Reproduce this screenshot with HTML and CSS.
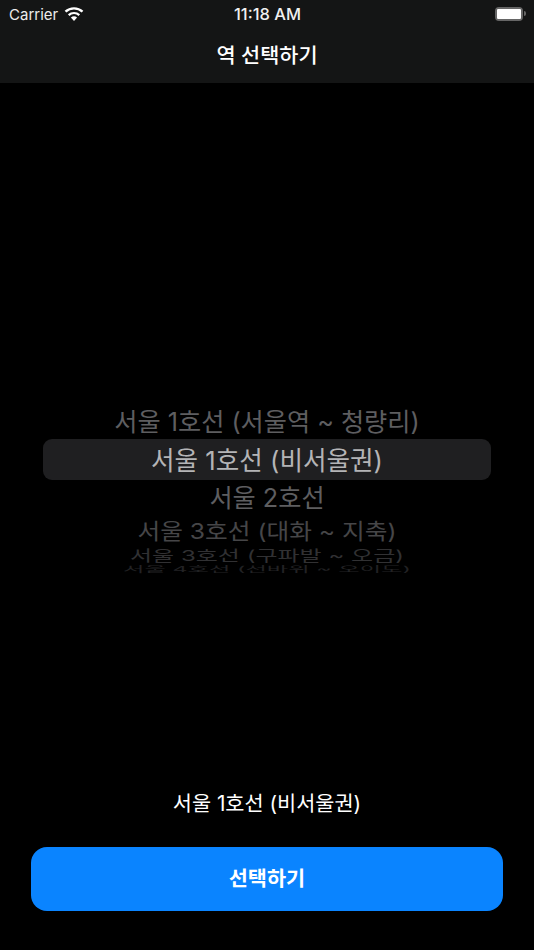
FILE: index.html
```html
<!DOCTYPE html>
<html lang="ko">
  <head>
    <meta charset="UTF-8" />
    <meta name="viewport" content="width=device-width, initial-scale=1.0" />
    <title>역 선택하기</title>
    <link rel="stylesheet" href="styles.css">
  </head>
  <body>
    <div class="screen">
      <header class="topBar">
        <div class="statusBar">
          <div class="statusLeft">
            <span>Carrier</span>
            <svg class="wifiIcon" width="20" height="15" viewBox="0 0 20 15">
              <path d="M10 15 L6.9 11.6 A4.6 4.6 0 0 1 13.1 11.6 Z" fill="#fff" />
              <path d="M4.7 9.1 A7.8 7.8 0 0 1 15.3 9.1" fill="none" stroke="#fff" stroke-width="2.2" />
              <path d="M1.5 5.7 A12.4 12.4 0 0 1 18.5 5.7" fill="none" stroke="#fff" stroke-width="2.4" />
            </svg>
          </div>
          <div class="statusTime">11:18 AM</div>
          <div class="statusRight">
            <div class="battery"><div class="batteryLevel"></div></div>
            <div class="batteryNub"></div>
          </div>
        </div>
        <div class="navBar">역 선택하기</div>
      </header>
      <main class="content">
        <div class="picker">
          <div class="pickerRow rowAbove">서울 1호선 (서울역 ~ 청량리)</div>
          <div class="pickerRow rowSelected">서울 1호선 (비서울권)</div>
          <div class="pickerRow rowBelow">서울 2호선</div>
          <div class="pickerRow rowMid">서울 3호선 (대화 ~ 지축)</div>
          <div class="pickerRow rowFar">서울 3호선 (구파발 ~ 오금)</div>
          <div class="pickerRow rowLast">서울 4호선 (선바위 ~ 오이도)</div>
        </div>
        <div class="selectedLabel">서울 1호선 (비서울권)</div>
        <button type="button" class="selectButton">선택하기</button>
      </main>
    </div>
  </body>
</html>
```

FILE: styles.css
```css
html {
  box-sizing: border-box;
  font-family: Inter, "Noto Sans CJK KR", sans-serif;
}

*,
*:before,
*:after {
  box-sizing: inherit;
}

body {
  margin: 0;
  padding: 0;
  background-color: #000;
  color: #fff;
}

.screen {
  height: 950px;
  display: flex;
  flex-direction: column;
  overflow: hidden;
}

.topBar {
  height: 83px;
  background-color: #141515;
}

.statusBar {
  height: 28px;
  display: flex;
  align-items: center;
  justify-content: space-between;
  padding: 0 8px 0 9px;
  font-size: 15px;
}

.statusLeft {
  width: 150px;
  display: flex;
  align-items: center;
  gap: 6px;
  color: #ececec;
}

.wifiIcon {
  display: block;
  margin-bottom: 2px;
}

.statusTime {
  font-size: 16.5px;
  font-weight: 500;
  color: #f0f0f0;
}

.statusRight {
  width: 150px;
  display: flex;
  align-items: center;
  justify-content: flex-end;
  gap: 1px;
  margin-bottom: 1px;
}

.battery {
  width: 28px;
  height: 14px;
  border: 2px solid #666;
  border-radius: 4px;
}

.batteryLevel {
  height: 100%;
  background-color: #fff;
  border-radius: 1px;
}

.batteryNub {
  width: 2px;
  height: 5px;
  background-color: #666;
  border-radius: 0 2px 2px 0;
}

.navBar {
  height: 55px;
  display: flex;
  align-items: center;
  justify-content: center;
  padding-bottom: 4px;
  font-size: 20.8px;
  font-weight: 500;
}

.content {
  flex: 1;
  display: flex;
  flex-direction: column;
  padding: 319px 31px 39px;
}

.picker {
  margin: 0 12px;
}

.pickerRow {
  display: flex;
  align-items: center;
  justify-content: center;
  white-space: nowrap;
  font-size: 25.2px;
}

.rowSelected {
  height: 41px;
  padding-bottom: 2px;
  background-color: #1f1f21;
  border-radius: 9px;
  font-size: 25.6px;
  color: #b4b4b6;
}

.rowAbove {
  height: 37px;
  padding-bottom: 2px;
  color: #5e5e60;
}

.rowBelow {
  height: 31px;
  color: #5e5e60;
}

.rowMid {
  height: 37px;
  font-size: 24.7px;
  color: #464648;
  transform: scaleY(0.86);
}

.rowFar {
  height: 12px;
  font-size: 24px;
  color: #313133;
  transform: scaleY(0.62);
}

.rowLast {
  height: 19px;
  line-height: 19px;
  font-size: 23.3px;
  color: #222224;
  transform: scaleY(0.34);
}

.selectedLabel {
  margin-top: auto;
  margin-bottom: 29px;
  text-align: center;
  font-size: 20.8px;
  line-height: 28px;
}

.selectButton {
  height: 64px;
  padding-bottom: 5px;
  border: none;
  border-radius: 16px;
  background-color: #0a84ff;
  color: #fff;
  font-family: inherit;
  font-size: 20.8px;
  font-weight: 700;
}
```
